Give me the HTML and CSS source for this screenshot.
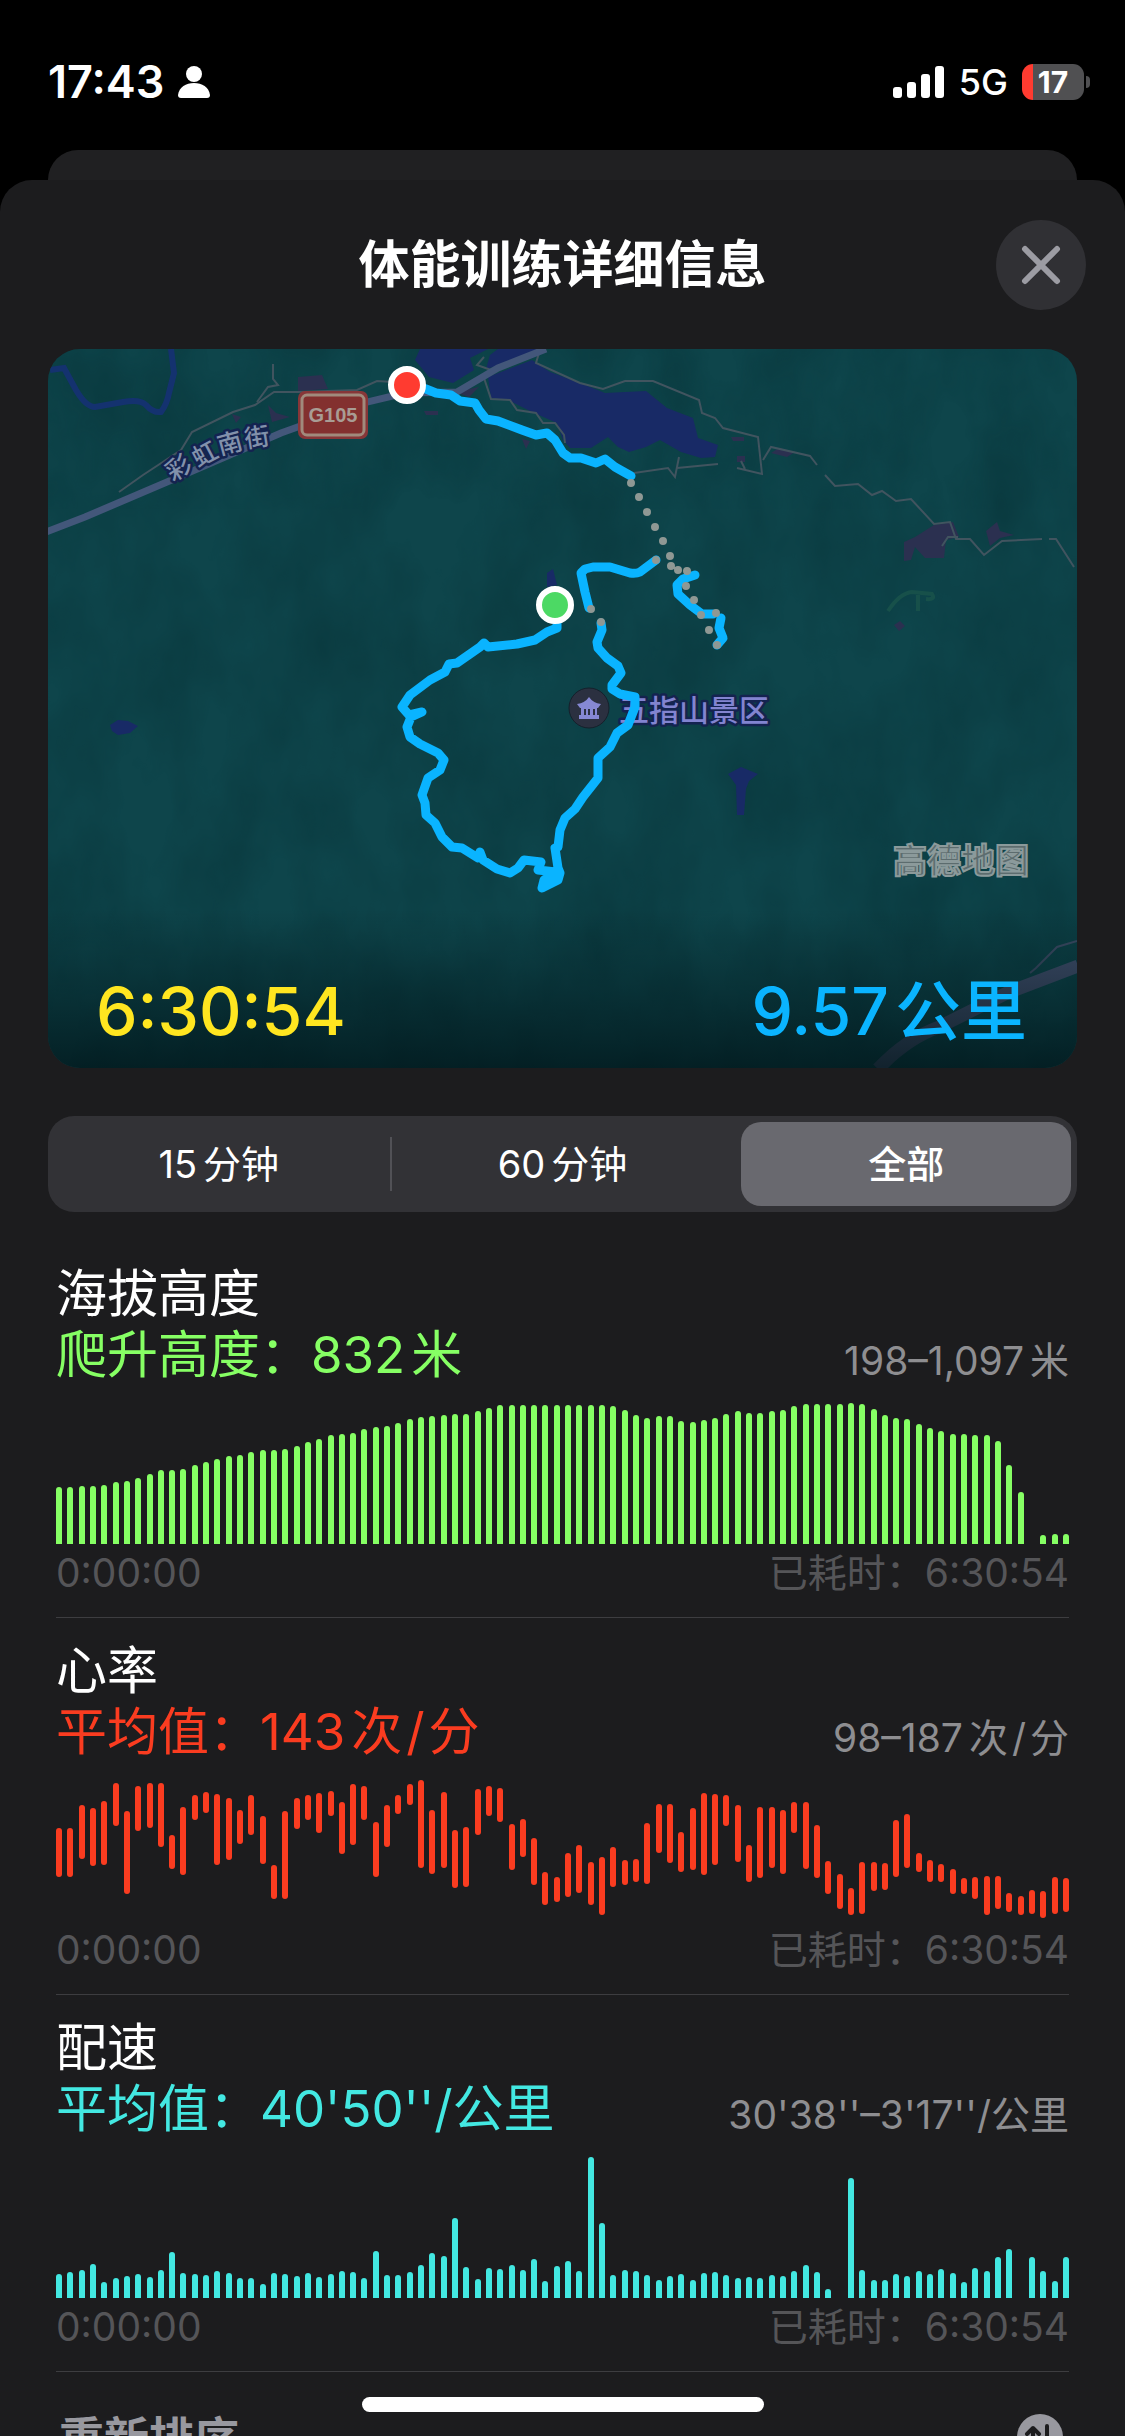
FILE: index.html
```html
<!DOCTYPE html>
<html lang="zh-CN">
<head>
<meta charset="utf-8">
<meta name="viewport" content="width=device-width, initial-scale=1">
<title>体能训练详细信息</title>
<link rel="stylesheet" href="styles.css">
</head>
<body>
<div class="screen">
  <header class="status">
    <div class="status-left">
      <span class="clock">17:43</span>
      <svg class="person" viewBox="0 0 32 32" aria-hidden="true"><circle cx="16" cy="8" r="8"/><path d="M0 29C1 21 8 17 16 17s15 4 16 12q0 3-3 3H3q-3 0-3-3z"/></svg>
    </div>
    <div class="status-right">
      <svg class="signal" viewBox="0 0 52 32" aria-hidden="true"><rect x="0" y="21" width="9" height="11" rx="3"/><rect x="14" y="16" width="9" height="16" rx="3"/><rect x="28" y="8" width="9" height="24" rx="3"/><rect x="42" y="0" width="9" height="32" rx="3"/></svg>
      <span class="network">5G</span>
      <span class="battery"><span class="battery-level">17</span></span>
    </div>
  </header>

  <div class="back-card"></div>

  <main class="sheet">
    <div class="sheet-head">
      <h1>体能训练详细信息</h1>
      <button class="close" type="button" aria-label="关闭">
        <svg viewBox="0 0 40 40" aria-hidden="true"><path d="M4 4l32 32M36 4L4 36"/></svg>
      </button>
    </div>

    <section class="map">
      <svg class="map-art" viewBox="0 0 1029 719" aria-label="路线图">
        <defs>
          <filter id="relief" x="0" y="0" width="100%" height="100%" color-interpolation-filters="sRGB">
            <feTurbulence type="fractalNoise" baseFrequency=".014 .008" numOctaves="4" seed="8"/>
            <feColorMatrix values="0 0 0 0 .03  0 0 0 0 .2  0 0 0 0 .22  1.6 0 0 0 -.5"/>
          </filter>
          <linearGradient id="shade" x1="0" y1="0" x2="0" y2="1">
            <stop offset="0" stop-color="#001216" stop-opacity="0"/>
            <stop offset="1" stop-color="#001216" stop-opacity=".72"/>
          </linearGradient>
        </defs>
        <rect width="1029" height="719" fill="#0e454b"/>
        <rect width="1029" height="719" filter="url(#relief)" opacity=".6"/>
        <g fill="#182a66">
          <path d="M372 0L367 11 381 28 405 34 426 21 422 9 440 0z"/>
          <path d="M440 28L484 11 502 23 532 34 557 44 598 42 619 59 645 69 650 89 670 96 667 108 653 109 633 103 612 91 598 98 581 103 570 98 560 88 543 99 522 99 515 91 509 74 484 63 460 51 443 49z"/>
          <path d="M450 0h42l-20 10-34 10 4-14z"/>
          <path d="M499 224l6-4 4 16-10 2zM680 425l13-7 17 7-9 7-3 8-2 26h-7l-1-30zM62 376l8-5 10 1 10 5-8 7-12 2-6-4z"/>
        </g>
        <path d="M2 21L16 19 28 41Q38 58 47 58L75 53Q92 50 98 56 105 64 113 63 119 55 121 44L126 24 123 0" fill="none" stroke="#14326f" stroke-width="6"/>
        <g fill="#2b3050">
          <path d="M856 193L867 188 886 176 905 173 911 188 898 191 896 209 877 209 867 198 863 211 856 212z"/>
          <path d="M938 182l11-9 3 9 14 4-14 3-10 8zM723 104l8-5 16 4-8 5zM846 276l6-4 5 5-6 5zM683 88h13v4h-11zM689 107h8v6h-8zM250 28l24-2 6 14-30 2zM407 43l24-5-10 10zM376 62h14v4h-12zM474 90l8 2-4 8zM184 65l9 3-5 6zM220 56l8 8 14 4-18 5z"/>
        </g>
        <path d="M840 262q12-18 24-19l20 2q4 6-6 5M870 246v16" fill="none" stroke="#17504a" stroke-width="4"/>
        <g fill="none" stroke="#41545f" stroke-width="2">
          <path d="M71 143L95 126 133 101 144 83 185 63 207 56 226 43 250 43 309 41 329 32 345 33"/>
          <path d="M209 53L220 38 230 36 225 30V15"/>
          <path d="M436 29L443 50 462 51 469 61 488 64 495 74 507 74 516 86 517 94M436 8L429 16 443 21M491 4L488 14 532 34 555 40 577 32 605 32 651 51 654 64 667 69 675 79 710 88 714 125 689 119M693 112l4 8M715 111L723 98 762 107 769 116M777 126L787 137 810 135 824 146 834 142 848 152 863 150 886 175 902 173 908 190 922 190 936 206 954 192 994 190M1001 190h7l18 28M894 197l6-9h10M586 124L620 119 627 128 631 108M629 119L670 115"/>
        </g>
        <path d="M-2 183L37 168 119 133 233 84 319 53 357 44 409 43 450 19 498 0" fill="none" stroke="#43577a" stroke-width="7"/>
        <path d="M830 720Q858 690 891 678L959 644 1030 617" fill="none" stroke="#3f4d6a" stroke-width="13"/>
        <path d="M982 624l6-5 21-21 20-6" fill="none" stroke="#3b4a63" stroke-width="2"/>

        <rect x="250" y="42" width="70" height="48" rx="7" fill="#873638"/>
        <rect x="254" y="46" width="62" height="40" rx="5" fill="#83302f" stroke="#a08a7c" stroke-width="3"/>
        <text class="shield" x="285" y="73" text-anchor="middle">G105</text>
        <text class="street" x="125 150 172 198" y="133 119 106 99" rotate="-33 -28 -15 -9">彩虹南街</text>

        <circle cx="541" cy="359" r="20" fill="#2b3040" stroke="#15202b"/>
        <path d="M541 344v4q4 6 12 7l-3 4h-1v7h2v4h-20v-4h2v-7h-1l-3-4q8-1 12-7v-4zM536 360v6h2v-6zM540 360v6h2v-6zM545 360v6h2v-6z" fill="#8688d3" fill-rule="evenodd"/>
        <text class="poi" x="571" y="372">五指山景区</text>
        <text class="watermark" x="845" y="524">高德地图</text>
        <rect y="560" width="1029" height="159" fill="url(#shade)"/>

        <g fill="none" stroke="#0ab4ff" stroke-width="9" stroke-linecap="round" stroke-linejoin="round">
          <path d="M359 36L378 40 388 44 403 46 412 52 427 54 431 61 438 70 450 72 474 81 488 86 499 84 507 91 515 104 522 109 533 109 548 114 557 110 567 118 583 127"/>
          <path d="M608 211L592 223Q588 225 582 224L562 218 545 218 537 220 533 224 537 243 541 259"/>
          <path d="M647 226L635 230 629 236 630 245 642 256 654 265 665 265M673 269L671 279 675 289 669 296"/>
          <path d="M553 274L554 281 549 293 550 299 559 309 570 317 573 324 564 336 564 340 572 345 587 348 587 358 580 376 569 384 562 398 550 409 550 429 535 448 527 460 517 469 512 481 510 498 507 499 510 519 512 524 510 531 494 539 496 531 508 523 490 521 493 513 476 511 470 519 462 524 449 520 435 511 432 503 430 509 414 499 404 498 394 488 387 474 378 466 377 454 374 446 380 429 392 421 396 411 390 404 372 395 362 388 359 378 363 368 374 363 361 366 354 358 362 346 382 331 397 323 401 315 409 314 432 298 436 294 440 298 469 295 487 291 499 283 509 279V260"/>
        </g>
        <g class="gap-dots">
          <path d="M583 134h0M591 148h0M599 163h0M607 178h0M615 192h0M622 207h0M623 217h0M630 221h0M639 222h0M638 237h0M646 251h0M653 266h0M661 281h0M669 296h0M668 264h0M608 211h0M543 260h0M553 273h0"/>
        </g>
        <g stroke="#fff" stroke-width="6">
          <circle cx="359" cy="36" r="16" fill="#ff3b30"/>
          <circle cx="507" cy="256" r="16" fill="#4cd964"/>
        </g>
      </svg>
      <div class="map-totals">
        <span class="duration">6:30:54</span>
        <span class="distance">9.57<span class="unit">公里</span></span>
      </div>
    </section>

    <div class="segments" role="group" aria-label="时间范围">
      <button type="button" class="segment">15<span class="unit">分钟</span></button>
      <button type="button" class="segment divided">60<span class="unit">分钟</span></button>
      <button type="button" class="segment selected" aria-pressed="true">全部</button>
    </div>

    <section class="metric elevation">
      <h2>海拔高度</h2>
      <div class="summary">
        <p class="value">爬升高度：832<span class="unit">米</span></p>
        <p class="range">198–1,097<span class="unit">米</span></p>
      </div>
      <div class="chart" id="elevation"></div>
      <div class="axis"><span>0:00:00</span><span>已耗时：6:30:54</span></div>
    </section>

    <section class="metric heart">
      <h2>心率</h2>
      <div class="summary">
        <p class="value">平均值：143<span class="unit">次</span><span class="slash">/</span>分</p>
        <p class="range">98–187<span class="unit">次</span><span class="slash">/</span>分</p>
      </div>
      <div class="chart" id="heart"></div>
      <div class="axis"><span>0:00:00</span><span>已耗时：6:30:54</span></div>
    </section>

    <section class="metric pace">
      <h2>配速</h2>
      <div class="summary">
        <p class="value">平均值：40'50''/公里</p>
        <p class="range">30'38''–3'17''/公里</p>
      </div>
      <div class="chart" id="pace"></div>
      <div class="axis"><span>0:00:00</span><span>已耗时：6:30:54</span></div>
    </section>

    <button type="button" class="reorder">
      <span>重新排序</span>
      <svg viewBox="0 0 46 46" aria-hidden="true"><circle cx="23" cy="23" r="23" fill="#98989f"/><path d="M16 34V14M10 20l6-6 6 6M30 12v20M24 26l6 6 6-6" fill="none" stroke="#1c1c1e" stroke-width="4" stroke-linecap="round" stroke-linejoin="round"/></svg>
    </button>
  </main>
  <div class="home-indicator"></div>
</div>
<script src="charts.js"></script>
</body>
</html>
```
FILE: styles.css
```css
* { box-sizing: border-box; }

body {
  margin: 0;
  background: #000;
  color: #fff;
  font-family: Inter, "Noto Sans CJK SC", sans-serif;
}

h1, h2, p { margin: 0; font-weight: 400; }

button {
  border: 0;
  padding: 0;
  background: none;
  color: inherit;
  font: inherit;
}

.unit { margin-left: 6px; }
.slash { margin: 0 4px; }

.screen {
  display: flex;
  flex-direction: column;
  height: 100vh;
  overflow: hidden;
}

/* Status bar */
.status {
  display: flex;
  flex: none;
  justify-content: space-between;
  align-items: center;
  height: 150px;
  padding: 14px 41px 0 48px;
}
.status-left, .status-right { display: flex; align-items: center; }
.status-left, .status-right { gap: 14px; }
.clock { font-size: 45px; line-height: 48px; font-weight: 600; }
.person { width: 32px; height: 32px; fill: #fff; }
.signal { width: 52px; height: 32px; fill: #fff; }
.network { font-size: 36px; line-height: 48px; font-weight: 500; }
.battery {
  position: relative;
  width: 62px;
  height: 36px;
  border-radius: 11px;
  background: linear-gradient(90deg, #ff3b30 11px, #505052 11px);
  text-align: center;
}
.battery::after {
  content: "";
  position: absolute;
  left: 64px;
  top: 12px;
  width: 4px;
  height: 12px;
  border-radius: 0 4px 4px 0;
  background: #505052;
}
.battery-level { display: block; font-size: 30px; line-height: 36px; font-weight: 700; }

/* Sheets */
.back-card {
  flex: none;
  height: 30px;
  margin: 0 48px;
  border-radius: 30px 30px 0 0;
  background: #202022;
}
.sheet {
  flex: 1;
  min-height: 0;
  overflow: hidden;
  padding: 0 48px;
  border-radius: 32px 32px 0 0;
  background: #1c1c1e;
}
.sheet-head {
  display: grid;
  grid-template-columns: 90px 1fr 90px;
  align-items: center;
  height: 169px;
  margin-right: -9px;
  margin-left: -9px;
}
.sheet-head h1 {
  grid-column: 2;
  text-align: center;
  font-size: 51px;
  line-height: 60px;
  font-weight: 600;
}
.close {
  display: grid;
  place-items: center;
  width: 90px;
  height: 90px;
  border-radius: 50%;
  background: #303034;
}
.close svg {
  width: 40px;
  height: 40px;
  fill: none;
  stroke: #9c9ca3;
  stroke-width: 6;
  stroke-linecap: round;
}

/* Map */
.map {
  display: grid;
  overflow: hidden;
  border-radius: 32px;
}
.map-art, .map-totals { grid-area: 1 / 1; }
.map-art { display: block; width: 100%; }
.map-totals {
  display: flex;
  align-self: end;
  justify-content: space-between;
  padding: 0 50px 17px 48px;
  font-size: 66px;
  line-height: 80px;
  font-weight: 500;
}
.duration { color: #ffe620; }
.distance { color: #0ab4ff; }
.shield { font: 700 20px "Liberation Sans", sans-serif; fill: #a99c94; }
.street, .poi {
  font-family: "Noto Sans CJK SC", sans-serif;
  font-weight: 500;
  stroke: #142350;
  stroke-width: 5;
  stroke-linejoin: round;
  paint-order: stroke;
}
.street { font-size: 25px; fill: #8291ab; }
.poi { font-size: 30px; fill: #8284d0; }
.watermark {
  font: 700 34px "Noto Sans CJK SC", sans-serif;
  fill: #5c6c6e;
  stroke: #8b9a9b;
  stroke-width: 2;
}
.gap-dots {
  fill: none;
  stroke: #8f9894;
  stroke-width: 8;
  stroke-linecap: round;
}

/* Time range */
.segments {
  display: grid;
  grid-template-columns: repeat(3, 1fr);
  gap: 14px;
  height: 96px;
  margin-top: 48px;
  padding: 6px;
  border-radius: 26px;
  background: #323236;
}
.segment {
  border-radius: 20px;
  font-size: 38px;
  line-height: 48px;
}
.divided { position: relative; }
.divided::before {
  content: "";
  position: absolute;
  left: -8px;
  top: 15px;
  bottom: 15px;
  width: 2px;
  background: #515156;
}
.selected { background: #69696f; font-weight: 500; }

/* Metrics */
.metric {
  margin: 0 8px;
  padding: 22px 0 20px;
  border-bottom: 1px solid #3d3d40;
}
.segments + .metric { margin-top: 29px; }
.metric h2, .value { font-size: 51px; line-height: 61px; }
.summary {
  display: flex;
  justify-content: space-between;
  align-items: flex-end;
  height: 61px;
}
.range { font-size: 39px; line-height: 48px; color: #8e8e91; }
.chart {
  display: flex;
  justify-content: space-between;
  height: 144px;
  margin: 15px 0 5px;
}
.bar {
  align-self: end;
  width: 6px;
  border-radius: 3px 3px 0 0;
  background: currentColor;
}
.axis {
  display: flex;
  justify-content: space-between;
  font-size: 39px;
  line-height: 48px;
  color: #555558;
}
.elevation .value, .elevation .chart { color: #86ff64; }
.heart .value, .heart .chart { color: #fa3c20; }
.heart .bar { border-radius: 3px; }
.pace .value, .pace .chart { color: #43e8e2; }

.reorder {
  display: flex;
  justify-content: space-between;
  width: 100%;
  padding: 42px 14px 20px 11px;
  font-size: 45px;
  line-height: 50px;
  font-weight: 700;
  color: #98989f;
}
.reorder svg { width: 46px; height: 46px; }

.home-indicator {
  position: fixed;
  left: 50%;
  bottom: 24px;
  width: 402px;
  height: 15px;
  margin-left: -201px;
  border-radius: 8px;
  background: #fff;
}
```
FILE: charts.js
```javascript
const HEIGHT = 144;

const elevation = [
  57,57,58,58,59,62,63,66,70,74,74,75,79,82,85,88,89,92,94,94,95,98,102,105,109,
  110,111,115,117,118,121,125,127,128,129,130,130,133,136,139,139,139,139,139,139,
  139,139,139,139,138,134,129,126,128,128,123,122,124,126,130,133,131,131,133,134,
  138,140,140,140,140,141,140,135,129,126,125,120,116,113,110,110,109,109,103,79,52,0,9,10,10
];

const pace = [
  24,26,28,34,16,20,22,24,21,28,46,25,24,23,27,25,20,20,14,25,24,22,25,21,24,27,26,20,47,23,
  23,26,33,45,42,80,31,19,30,29,33,28,39,17,32,37,27,141,75,23,28,27,23,18,22,24,18,25,26,23,
  20,21,20,23,22,27,33,26,9,0,120,28,18,18,24,22,27,24,29,25,16,30,27,41,49,0,41,27,17,41
];

// Each reading is a [high, low] pair, measured downwards in thirds of a pixel.
const HEART_FLOOR = 873;
const heart = [
  [592,740],[592,740],[525,687],[534,708],[513,704],[459,588],[543,793],[468,602],[459,593],[459,651],
  [615,717],[531,735],[495,571],[486,549],[490,704],[504,690],[540,641],[495,614],[558,703],[704,806],
  [543,806],[504,597],[495,571],[490,609],[481,557],[517,672],[463,645],[468,571],[575,740],[525,651],
  [495,552],[463,525],[450,713],[540,731],[486,713],[602,775],[592,771],[477,615],[468,557],[472,575],
  [584,721],[567,681],[624,766],[727,825],[740,815],[669,801],[645,789],[696,825],[681,855],[651,771],
  [690,766],[687,757],[579,762],[521,669],[521,699],[606,726],[534,721],[490,735],[490,704],[495,588],
  [525,695],[645,757],[531,744],[531,713],[540,731],[517,609],[517,717],[584,744],[695,793],[731,837],
  [775,855],[695,851],[695,783],[699,780],[570,740],[552,713],[669,726],[690,757],[704,757],[717,793],
  [744,793],[739,806],[739,855],[739,837],[789,846],[798,855],[780,851],[784,864],[739,851],[744,846]
];

function draw(id, bars) {
  const chart = document.getElementById(id);
  for (const [low, high] of bars) {
    const bar = document.createElement("span");
    bar.className = "bar";
    bar.style.height = Math.round(high - low) + "px";
    bar.style.marginBottom = Math.round(low) + "px";
    chart.append(bar);
  }
}

const fromZero = values => values.map(v => [0, Math.min(v, HEIGHT)]);

draw("elevation", fromZero(elevation));
draw("pace", fromZero(pace));
draw("heart", heart.map(([top, bottom]) => [(HEART_FLOOR - bottom) / 3, (HEART_FLOOR - top) / 3]));
```
